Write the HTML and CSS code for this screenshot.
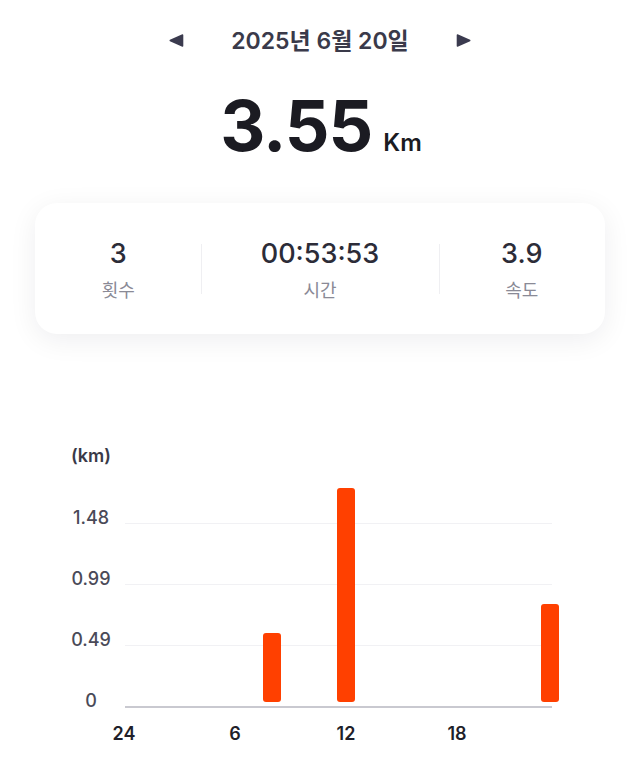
FILE: index.html
```html
<!DOCTYPE html>
<html lang="ko">
<head>
<meta charset="utf-8">
<title>거리 기록</title>
<link rel="stylesheet" href="styles.css">
</head>
<body>
<main class="page">
  <nav class="date-nav">
    <button class="nav-btn" aria-label="이전 날">
      <svg width="15" height="13" viewBox="0 0 15 13"><path d="M13.6 1 L13.6 12 L1.2 6.5 Z" fill="#3b3b4f" stroke="#3b3b4f" stroke-width="1.4" stroke-linejoin="round"/></svg>
    </button>
    <h1 class="date">2025년 6월 20일</h1>
    <button class="nav-btn" aria-label="다음 날">
      <svg width="15" height="13" viewBox="0 0 15 13"><path d="M1.4 1 L1.4 12 L13.8 6.5 Z" fill="#3b3b4f" stroke="#3b3b4f" stroke-width="1.4" stroke-linejoin="round"/></svg>
    </button>
  </nav>

  <div class="total">
    <span class="total-value">3.55</span>
    <span class="total-unit">Km</span>
  </div>

  <section class="card">
    <div class="stat">
      <div class="stat-value">3</div>
      <div class="stat-label">횟수</div>
    </div>
    <div class="divider"></div>
    <div class="stat stat-wide">
      <div class="stat-value">00:53:53</div>
      <div class="stat-label">시간</div>
    </div>
    <div class="divider"></div>
    <div class="stat">
      <div class="stat-value">3.9</div>
      <div class="stat-label">속도</div>
    </div>
  </section>

  <section class="chart">
    <div class="unit">(km)</div>
    <div class="plot">
      <div class="row"><span class="ylabel">1.48</span><div class="line"></div></div>
      <div class="row"><span class="ylabel">0.99</span><div class="line"></div></div>
      <div class="row"><span class="ylabel">0.49</span><div class="line"></div></div>
      <div class="row"><span class="ylabel">0</span><div class="line axis"></div></div>
      <div class="bars">
        <div class="bar" style="grid-column: 9; height: 69px"></div>
        <div class="bar" style="grid-column: 13; height: 214px"></div>
        <div class="bar" style="grid-column: 24; height: 98px"></div>
      </div>
    </div>
    <div class="xaxis">
      <span>24</span>
      <span>6</span>
      <span>12</span>
      <span>18</span>
    </div>
  </section>
</main>
</body>
</html>
```

FILE: styles.css
```css
* { box-sizing: border-box; }

html, body {
  margin: 0;
  padding: 0;
  background: #ffffff;
}

body {
  font-family: Inter, "Noto Sans CJK KR", "Noto Sans", sans-serif;
  color: #1d1d26;
  width: 640px;
}

.page {
  padding-top: 27px;
}

.date-nav {
  display: flex;
  justify-content: center;
  align-items: center;
  gap: 47px;
  height: 28px;
}

.nav-btn {
  border: 0;
  background: none;
  padding: 0;
  width: 15px;
  height: 13px;
  display: flex;
  margin-top: -2px;
}

.date {
  margin: 0;
  font-size: 23px;
  font-weight: 600;
  color: #3a3a4a;
  line-height: 28px;
  letter-spacing: 0;
}

.total {
  display: flex;
  justify-content: center;
  align-items: baseline;
  gap: 11px;
  margin-top: 36px;
  padding-left: 2px;
}

.total-value {
  font-size: 70px;
  font-weight: 700;
  line-height: 70px;
  letter-spacing: -1px;
  color: #1b1b22;
}

.total-unit {
  font-size: 24px;
  font-weight: 600;
  color: #1b1b22;
}

.card {
  margin: 42px 35px 0;
  height: 131px;
  background: #fff;
  border-radius: 22px;
  box-shadow: 0 6px 28px rgba(20, 20, 40, 0.07);
  display: flex;
  align-items: center;
  padding: 0 1px;
}

.stat {
  flex: 1;
  display: flex;
  flex-direction: column;
  align-items: center;
  margin-top: 4px;
}

.stat-wide {
  flex: 0 0 237px;
}

.stat-value {
  font-size: 27px;
  font-weight: 500;
  line-height: 32px;
  color: #2c2c38;
}

.stat-label {
  font-size: 18px;
  line-height: 24px;
  margin-top: 9px;
  color: #8a8a96;
}

.divider {
  width: 1px;
  height: 50px;
  background: #efeff2;
}

.chart {
  margin-top: 112px;
}

.unit {
  width: 62px;
  margin-left: 60px;
  text-align: center;
  font-size: 18px;
  font-weight: 600;
  line-height: 20px;
  color: #3a3a48;
}

.plot {
  position: relative;
  margin-left: 60px;
  width: 520px;
  margin-top: -3px;
}

.row {
  display: flex;
  align-items: flex-end;
  height: 61px;
}

.ylabel {
  width: 62px;
  text-align: center;
  font-size: 18px;
  font-weight: 500;
  line-height: 18px;
  margin-bottom: -3px;
  color: #4a4a58;
}

.line {
  flex: none;
  width: 427px;
  margin-left: 3px;
  height: 1px;
  background: #f1f1f4;
}

.line.axis {
  height: 2px;
  background: #c9c9d0;
  margin-bottom: -1px;
}

.bars {
  position: absolute;
  left: 54.75px;
  top: 0;
  bottom: 5px;
  display: grid;
  grid-template-columns: repeat(24, 18.5px);
  align-items: end;
}

.bar {
  grid-row: 1;
  width: 18px;
  justify-self: center;
  background: #ff4000;
  border-radius: 3px;
}

.xaxis {
  display: grid;
  grid-template-columns: repeat(4, 111px);
  margin-left: 68.5px;
  margin-top: 17px;
  font-size: 18px;
  font-weight: 600;
  line-height: 20px;
  color: #1f1f2a;
}

.xaxis span {
  text-align: center;
}
```
